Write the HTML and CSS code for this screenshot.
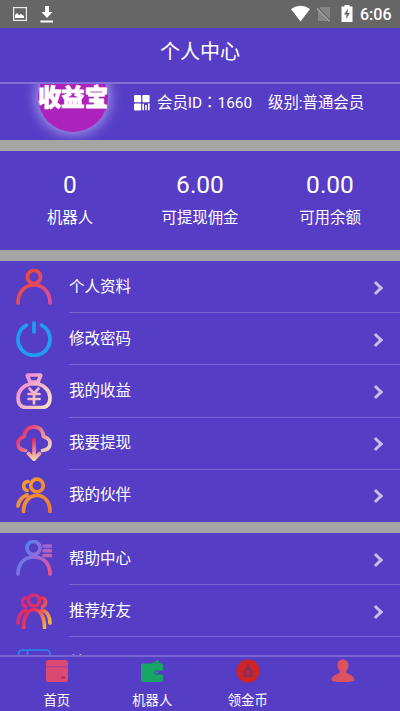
FILE: index.html
```html
<!DOCTYPE html>
<html lang="zh-CN">
<head>
<meta charset="utf-8">
<title>个人中心</title>
<link rel="stylesheet" href="styles.css">
</head>
<body>
<div class="app">
  <div class="status">
    <svg class="status-left" width="60" height="28" viewBox="0 0 60 28">
      <rect x="13.600" y="7.600" width="12.800" height="12.800" fill="none" stroke="#eee" stroke-width="1.200"/>
      <path d="M15 18v-3l2-2 2 2 2-1 3 2v2z" fill="#fff"/>
      <path d="M45 6h4v6h3.500L47 18l-5.500-6H45zM40.500 20.500h12.500v2H40.500z" fill="#fff"/>
    </svg>
    <svg class="status-right" width="70" height="28" viewBox="0 0 70 28">
      <path d="M1 9Q10.500 2.500 20 9L10.500 21.500z" fill="#fff"/>
      <path d="M30 7h10v14H28V10z" fill="#858585"/>
      <path d="M27 7.500l13 14" stroke="#666" stroke-width="2.600"/>
      <path d="M27 8.500l12.500 13" stroke="#aaa" stroke-width="1.200"/>
      <path d="M51.500 6.500h3v-1.500h5v1.500h3V22h-11z" fill="#fff"/>
      <path d="M58 8.500l-4 6h2.500L56 19l4-6h-2.500z" fill="#666"/>
    </svg>
    <span class="clock">6:06</span>
  </div>
  <header class="header">个人中心</header>
  <main class="content">
    <section class="profile">
      <div class="avatar"><span>收益宝</span></div>
      <svg class="qr" width="16" height="16" viewBox="0 0 16 16" fill="#fff">
        <rect width="7.200" height="7.200" rx="1"/><rect x="8.400" width="7.200" height="7.200" rx="1"/><rect y="8.400" width="7.200" height="7.200" rx="1"/>
        <path d="M8.400 8.800h1.600v6.400H8.400zM11.200 10h1.600v5.200h-1.600zM14 8.400h1.600v6.800H14z"/>
      </svg>
      <span class="member">会员ID<span class="colon" lang="zh-TW">：</span>1660</span>
      <span class="level">级别:普通会员</span>
    </section>
    <section class="stats">
      <div class="stat stat-a"><b>0</b><span>机器人</span></div>
      <div class="stat stat-b"><b>6.00</b><span>可提现佣金</span></div>
      <div class="stat stat-c"><b>0.00</b><span>可用余额</span></div>
    </section>
    <section class="menu">
      <div class="row">
        <svg class="icon" viewBox="0 0 36 36"><defs><linearGradient id="red" gradientUnits="userSpaceOnUse" x1="8" y1="8" x2="34" y2="30"><stop stop-color="#ec4938"/><stop offset="1" stop-color="#db4d9c"/></linearGradient></defs><g stroke="url(#red)"><circle cx="18" cy="8" r="6.500"/><path d="M2 34c0-10 6-18 16-18s16 8 16 18"/></g></svg>
        <div class="cell"><span>个人资料</span><i class="arrow"></i></div>
      </div>
      <div class="row">
        <svg class="icon" viewBox="0 0 36 36"><g stroke="#219cf5"><path d="M10.500 4.200a16 16 0 1 0 15 0M18 2v9"/></g></svg>
        <div class="cell"><span>修改密码</span><i class="arrow"></i></div>
      </div>
      <div class="row">
        <svg class="icon" viewBox="0 0 36 36"><defs><linearGradient id="bag" gradientUnits="userSpaceOnUse" x1="4" y1="8" x2="33" y2="32"><stop stop-color="#f08bd0"/><stop offset="1" stop-color="#f4dfc0"/></linearGradient></defs><g stroke="url(#bag)"><path d="M12 2h12q1 0 .5 1L22 9h-8l-2.500-6Q11 2 12 2zM14 11C6 13 2 19 2 25q0 9.500 9 9.500h14q9 0 9-9.500c0-6-4-12-12-14z"/><path d="M13.500 15.500l4.500 5 4.500-5M18 20.500v10M12.500 21h11M12.500 26h11" class="yen"/></g></svg>
        <div class="cell"><span>我的收益</span><i class="arrow"></i></div>
      </div>
      <div class="row">
        <svg class="icon" viewBox="0 0 36 36"><defs><linearGradient id="cloud" gradientUnits="userSpaceOnUse" x1="5" y1="4" x2="33" y2="25"><stop stop-color="#e52562"/><stop offset="1" stop-color="#eed5c0"/></linearGradient><linearGradient id="down" gradientUnits="userSpaceOnUse" x1="0" y1="14" x2="0" y2="36"><stop stop-color="#e72b5b"/><stop offset="1" stop-color="#f4dfb4"/></linearGradient></defs><g stroke="url(#cloud)"><path d="M9.500 25.500C4 25 2 22 2 18.500q0-5 6-7C9 4 13 1.800 18 1.800S27 5 27.500 11.500q6.500 2 6.500 7 0 6-7.500 7"/></g><g stroke="url(#down)"><path d="M18 14.500q.2 8 0 19M12.500 28.500L18 34.300l5.500-5.800"/></g></svg>
        <div class="cell"><span>我要提现</span><i class="arrow"></i></div>
      </div>
      <div class="row">
        <svg class="icon" viewBox="0 0 36 36"><defs><linearGradient id="orange" gradientUnits="userSpaceOnUse" x1="8" y1="5" x2="34" y2="34"><stop stop-color="#f29a32"/><stop offset="1" stop-color="#f07c38"/></linearGradient></defs><g stroke="url(#orange)"><circle cx="21" cy="8.500" r="6.300"/><path d="M12 4.500c-5-.5-6 8-1 9M2 29q1-8 9-11M7.500 34.500C7.500 25 13 18.500 21 18.500S34 25 34 34.500"/></g></svg>
        <div class="cell last"><span>我的伙伴</span><i class="arrow"></i></div>
      </div>
    </section>
    <section class="menu second">
      <div class="row">
        <svg class="icon" viewBox="0 0 36 36"><defs><linearGradient id="help" gradientUnits="userSpaceOnUse" x1="7" y1="10" x2="34" y2="27"><stop stop-color="#5681ee"/><stop offset=".5" stop-color="#9a68d8"/><stop offset="1" stop-color="#e55795"/></linearGradient></defs><g stroke="url(#help)"><circle cx="17.500" cy="8" r="6.500"/><path d="M2 34c0-10 6-17 16-17s16 7 16 17M28 6h6.500M28 10.700h6.500M28 15.500h6.500"/></g></svg>
        <div class="cell"><span>帮助中心</span><i class="arrow"></i></div>
      </div>
      <div class="row">
        <svg class="icon" viewBox="0 0 36 36"><defs><linearGradient id="team" gradientUnits="userSpaceOnUse" x1="3" y1="5" x2="34" y2="28"><stop stop-color="#c72b8b"/><stop offset=".5" stop-color="#e52f5d"/><stop offset="1" stop-color="#f5b443"/></linearGradient></defs><g stroke="url(#team)"><circle cx="18" cy="7.500" r="5.500"/><path d="M10 5c-4-.5-5 7-.5 8.500M26 5c4-.5 5 7 .5 8.500M2 30c0-6 3-12 8-13M34 30c0-6-3-12-8-13M7.500 34.500c0-10 4-18 10.500-18s10.500 8 10.500 18"/></g></svg>
        <div class="cell"><span>推荐好友</span><i class="arrow"></i></div>
      </div>
      <div class="row">
        <svg class="icon" viewBox="0 0 36 36"><g stroke="#278df0" stroke-width="1.600"><rect x="2.500" y="5" width="31.500" height="31" rx="4"/><path d="M11.500 5.500v30"/></g></svg>
        <div class="cell about"><span>关于</span><i class="arrow"></i></div>
      </div>
    </section>
  </main>
  <nav class="tabs">
    <div class="tab">
      <svg width="24" height="24" viewBox="0 0 24 24"><rect x="1" y="1" width="22" height="22" rx="2.500" fill="#db4871"/><path d="M1 7.700h22" stroke="#a944a0" stroke-width="1.200"/><path d="M16 18.500h4" stroke="#8c2f79" stroke-width="1.400"/></svg>
      <span>首页</span>
    </div>
    <div class="tab">
      <svg width="24" height="24" viewBox="0 0 24 24"><path d="M1 6.500q0-2 2-2h8L18 1l2 3.500h1q2 0 2 2V11h-6q-2.500 0-2.500 2.500T17 16h6v5q0 2-2 2H3q-2 0-2-2z" fill="#16a765"/><path d="M13 5l4.500-2L19 5" stroke="#397b82" fill="none"/><path d="M23.500 11.500H17a2 2 0 0 0 0 4h6.500" stroke="#36708c" fill="#563dc5"/><circle cx="17" cy="13.500" r="1.200" fill="#16a765"/></svg>
      <span>机器人</span>
    </div>
    <div class="tab">
      <svg width="24" height="24" viewBox="0 0 24 24"><circle cx="12" cy="12" r="11.500" fill="#d12321"/><path d="M10 4.500h4l-1 3c3 2 4.500 5 4.500 7.500 0 2.500-2 3.500-5.500 3.500S6.500 17.500 6.500 15c0-2.500 1.500-5.500 4.500-7.500z" fill="#8c2c58"/><path d="M10 11l2 2.500 2-2.500M12 13.500V17M10 14.500h4" stroke="#ca2730" fill="none"/></svg>
      <span>领金币</span>
    </div>
    <div class="tab">
      <svg width="24" height="24" viewBox="0 0 24 24"><path d="M12 .5c4 0 6 3 5.500 6.500-.4 3-2 4.500-2.500 6 0 2 8.500 2.500 8.500 8q0 2-11.500 2T.5 21C.5 15.500 9 15 9 13c-.5-1.500-2.100-3-2.500-6C6 3.500 8 .5 12 .5z" fill="#dc5261"/></svg>
    </div>
  </nav>
</div>
</body>
</html>
```
FILE: styles.css
```css
* { box-sizing: border-box; }
body {
  margin: 0;
  background: #563dc5;
  color: #fff;
  font-family: Roboto, "Noto Sans CJK SC", sans-serif;
}
.app {
  width: 400px;
  height: 711px;
  display: flex;
  flex-direction: column;
  overflow: hidden;
}
.status {
  flex: none;
  height: 28px;
  background: #666;
  display: flex;
  align-items: center;
}
.status-right { margin-left: 230px; }
.clock {
  font-size: 16px;
  font-weight: 500;
  line-height: 28px;
  padding-top: 1px;
}
.header {
  flex: none;
  height: 56px;
  border-bottom: 2px solid #8270d5;
  text-align: center;
  font-size: 20px;
  line-height: 49px;
}
.content {
  flex: 1;
  min-height: 0;
  overflow: hidden;
}
.profile {
  height: 56px;
  padding-left: 38px;
  display: flex;
  align-items: flex-start;
  overflow: hidden;
  font-size: 15.4px;
  line-height: 20px;
  white-space: nowrap;
}
.avatar {
  flex: none;
  width: 70px;
  height: 70px;
  margin-top: -22px;
  border-radius: 50%;
  background: #ac22bc;
  box-shadow: 0 0 13px 2px #a9a0ee;
  display: flex;
  align-items: center;
  justify-content: center;
  padding-top: 2px;
  font-size: 23.3px;
  font-weight: 900;
  -webkit-text-stroke: .8px #fff;
}
.qr { flex: none; margin: 11px 0 0 26px; }
.member { width: 111px; margin: 9px 0 0 7px; }
.colon {
  font-family: "Noto Sans CJK TC", sans-serif;
  line-height: 0;
}
.level { margin-top: 9px; }
.stats {
  height: 121px;
  border: 11px solid #a5a5a5;
  border-width: 11px 0;
  display: flex;
  padding-top: 19px;
}
.stat {
  display: flex;
  flex-direction: column;
  align-items: center;
}
.stat-a { width: 140px; }
.stat-b { width: 120px; }
.stat-c { width: 140px; }
.stat b {
  font-size: 24.5px;
  font-weight: 400;
  line-height: 30px;
}
.stat span {
  font-size: 15.4px;
  line-height: 20px;
  margin-top: 8px;
}
.row {
  height: 52.2px;
  padding-left: 16px;
  display: flex;
}
.icon {
  flex: none;
  width: 36px;
  height: 36px;
  margin: 7.5px 17px 0 0;
  fill: none;
  stroke-width: 3.7px;
  stroke-linecap: round;
  stroke-linejoin: round;
}
.yen { stroke-width: 2.7px; }
.cell {
  flex: 1;
  border-bottom: 1px solid #7765d3;
  display: flex;
  justify-content: space-between;
  padding: 15.6px 19px 0 0;
  font-size: 15.5px;
  line-height: 20px;
}
.cell.last { border-bottom-color: transparent; }
.cell.about { padding-top: 15.6px; }
.arrow {
  width: 10px;
  height: 10px;
  margin-top: 6px;
  border: solid #c5bdec;
  border-width: 3px 3px 0 0;
  transform: rotate(45deg);
}
.second { border-top: 11px solid #a5a5a5; }
.tabs {
  flex: none;
  height: 56px;
  border-top: 2px solid #7765d3;
  display: flex;
  padding: 2px 9px 0;
}
.tab {
  flex: 1;
  display: flex;
  flex-direction: column;
  align-items: center;
}
.tab span {
  margin-top: 9px;
  font-size: 13.3px;
  line-height: 18px;
}
```
